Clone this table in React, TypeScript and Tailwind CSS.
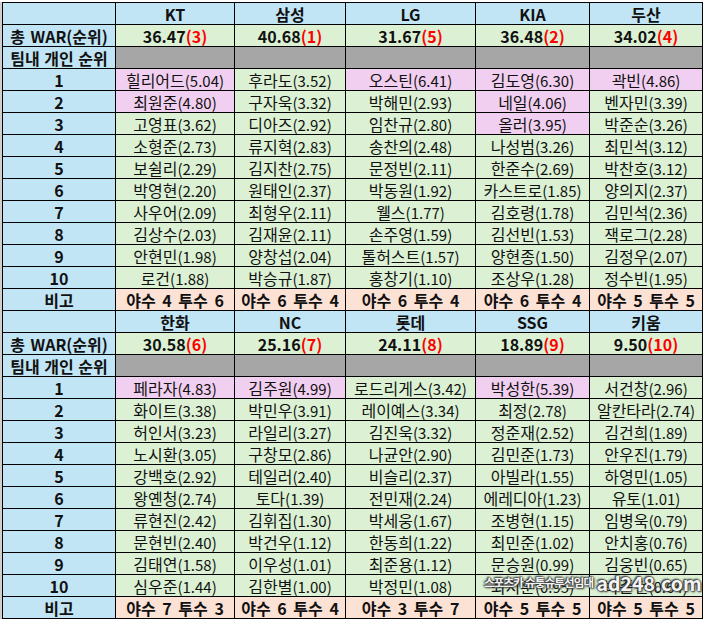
import React from 'react'

type Cell = { name: string; war: string; pink?: boolean }
type Section = {
  teams: string[]
  totals: { war: string; rank: string }[]
  rows: Cell[][]
  notes: string[]
}

const c = (s: string, pink = false): Cell => {
  const i = s.indexOf('(')
  return { name: s.slice(0, i), war: s.slice(i), pink }
}

const sections: Section[] = [
  {
    teams: ['KT', '삼성', 'LG', 'KIA', '두산'],
    totals: [
      { war: '36.47', rank: '(3)' },
      { war: '40.68', rank: '(1)' },
      { war: '31.67', rank: '(5)' },
      { war: '36.48', rank: '(2)' },
      { war: '34.02', rank: '(4)' },
    ],
    rows: [
      [c('힐리어드(5.04)', true), c('후라도(3.52)'), c('오스틴(6.41)', true), c('김도영(6.30)', true), c('곽빈(4.86)', true)],
      [c('최원준(4.80)', true), c('구자욱(3.32)'), c('박해민(2.93)'), c('네일(4.06)', true), c('벤자민(3.39)')],
      [c('고영표(3.62)'), c('디아즈(2.92)'), c('임찬규(2.80)'), c('올러(3.95)', true), c('박준순(3.26)')],
      [c('소형준(2.73)'), c('류지혁(2.83)'), c('송찬의(2.48)'), c('나성범(3.26)'), c('최민석(3.12)')],
      [c('보쉴리(2.29)'), c('김지찬(2.75)'), c('문정빈(2.11)'), c('한준수(2.69)'), c('박찬호(3.12)')],
      [c('박영현(2.20)'), c('원태인(2.37)'), c('박동원(1.92)'), c('카스트로(1.85)'), c('양의지(2.37)')],
      [c('사우어(2.09)'), c('최형우(2.11)'), c('웰스(1.77)'), c('김호령(1.78)'), c('김민석(2.36)')],
      [c('김상수(2.03)'), c('김재윤(2.11)'), c('손주영(1.59)'), c('김선빈(1.53)'), c('잭로그(2.28)')],
      [c('안현민(1.98)'), c('양창섭(2.04)'), c('톨허스트(1.57)'), c('양현종(1.50)'), c('김정우(2.07)')],
      [c('로건(1.88)'), c('박승규(1.87)'), c('홍창기(1.10)'), c('조상우(1.28)'), c('정수빈(1.95)')],
    ],
    notes: ['야수 4 투수 6', '야수 6 투수 4', '야수 6 투수 4', '야수 6 투수 4', '야수 5 투수 5'],
  },
  {
    teams: ['한화', 'NC', '롯데', 'SSG', '키움'],
    totals: [
      { war: '30.58', rank: '(6)' },
      { war: '25.16', rank: '(7)' },
      { war: '24.11', rank: '(8)' },
      { war: '18.89', rank: '(9)' },
      { war: '9.50', rank: '(10)' },
    ],
    rows: [
      [c('페라자(4.83)', true), c('김주원(4.99)', true), c('로드리게스(3.42)'), c('박성한(5.39)', true), c('서건창(2.96)')],
      [c('화이트(3.38)'), c('박민우(3.91)'), c('레이예스(3.34)'), c('최정(2.78)'), c('알칸타라(2.74)')],
      [c('허인서(3.23)'), c('라일리(3.27)'), c('김진욱(3.32)'), c('정준재(2.52)'), c('김건희(1.89)')],
      [c('노시환(3.05)'), c('구창모(2.86)'), c('나균안(2.90)'), c('김민준(1.73)'), c('안우진(1.79)')],
      [c('강백호(2.92)'), c('테일러(2.40)'), c('비슬리(2.37)'), c('아빌라(1.55)'), c('하영민(1.05)')],
      [c('왕옌청(2.74)'), c('토다(1.39)'), c('전민재(2.24)'), c('에레디아(1.23)'), c('유토(1.01)')],
      [c('류현진(2.42)'), c('김휘집(1.30)'), c('박세웅(1.67)'), c('조병현(1.15)'), c('임병욱(0.79)')],
      [c('문현빈(2.40)'), c('박건우(1.12)'), c('한동희(1.22)'), c('최민준(1.02)'), c('안치홍(0.76)')],
      [c('김태연(1.58)'), c('이우성(1.01)'), c('최준용(1.12)'), c('문승원(0.99)'), c('김웅빈(0.65)')],
      [c('심우준(1.44)'), c('김한별(1.00)'), c('박정민(1.08)'), c('최지훈(0.95)'), c('박준현(0.64)')],
    ],
    notes: ['야수 7 투수 3', '야수 6 투수 4', '야수 3 투수 7', '야수 5 투수 5', '야수 5 투수 5'],
  },
]

const td = 'border border-black p-0 text-center align-middle h-[22px] leading-none whitespace-nowrap'
const label = `${td} bg-[#c2e5f6] font-bold text-[16px]`

const SectionRows = ({ s }: { s: Section }) => (
  <>
    <tr>
      <td className={label}></td>
      {s.teams.map((t) => (
        <td key={t} className={`${td} bg-[#c2e5f6] font-bold text-[16px]`}>
          {t}
        </td>
      ))}
    </tr>
    <tr>
      <td className={`${label} [word-spacing:2px]`}>총 WAR(순위)</td>
      {s.totals.map((t, i) => (
        <td key={i} className={`${td} bg-[#dcf1d4] font-bold text-[16px]`}>
          {t.war}
          <span className="text-[#ff0000]">{t.rank}</span>
        </td>
      ))}
    </tr>
    <tr>
      <td className={`${label} [word-spacing:1px]`}>팀내 개인 순위</td>
      {s.teams.map((t) => (
        <td key={t} className={`${td} bg-[#a6a6a6]`}></td>
      ))}
    </tr>
    {s.rows.map((row, r) => (
      <tr key={r}>
        <td className={label}>{r + 1}</td>
        {row.map((p, i) => (
          <td key={i} className={`${td} ${p.pink ? 'bg-[#f1cff0]' : 'bg-[#dcf1d4]'}`}>
            <span className="text-[16px]">{p.name}</span>
            <span className="text-[15px]">{p.war}</span>
          </td>
        ))}
      </tr>
    ))}
    <tr>
      <td className={label}>비고</td>
      {s.notes.map((n, i) => (
        <td key={i} className={`${td} bg-[#fce2d5] font-bold text-[16px] [word-spacing:3px]`}>
          {n}
        </td>
      ))}
    </tr>
  </>
)

export default function App() {
  return (
    <div className="relative w-[705px] h-[620px] overflow-hidden bg-white pt-[2px] font-['Noto_Sans_CJK_KR','Noto_Sans',sans-serif] text-[#111]">
      <div className="border-l-2 border-[#cfcfcf] w-[703px]">
        <table className="table-fixed border-collapse w-[700px]">
          <colgroup>
            <col className="w-[113px]" />
            <col className="w-[119px]" />
            <col className="w-[111px]" />
            <col className="w-[130px]" />
            <col className="w-[114px]" />
            <col className="w-[113px]" />
          </colgroup>
          <tbody>
            {sections.map((s, i) => (
              <SectionRows key={i} s={s} />
            ))}
          </tbody>
        </table>
      </div>
      <div className="absolute left-[484px] top-[573px] flex items-center gap-[3px] whitespace-nowrap font-bold text-[#f4f4f4] [text-shadow:0_0_1px_#333,0_0_2px_#333,1px_1px_2px_#333,-1px_-1px_2px_#333]">
        <span className="text-[11.5px] leading-none tracking-[-0.8px]">스포츠카 슈퉁슈투선임대</span>
        <span className="text-[19.5px] leading-none">ad248.com</span>
      </div>
    </div>
  )
}
